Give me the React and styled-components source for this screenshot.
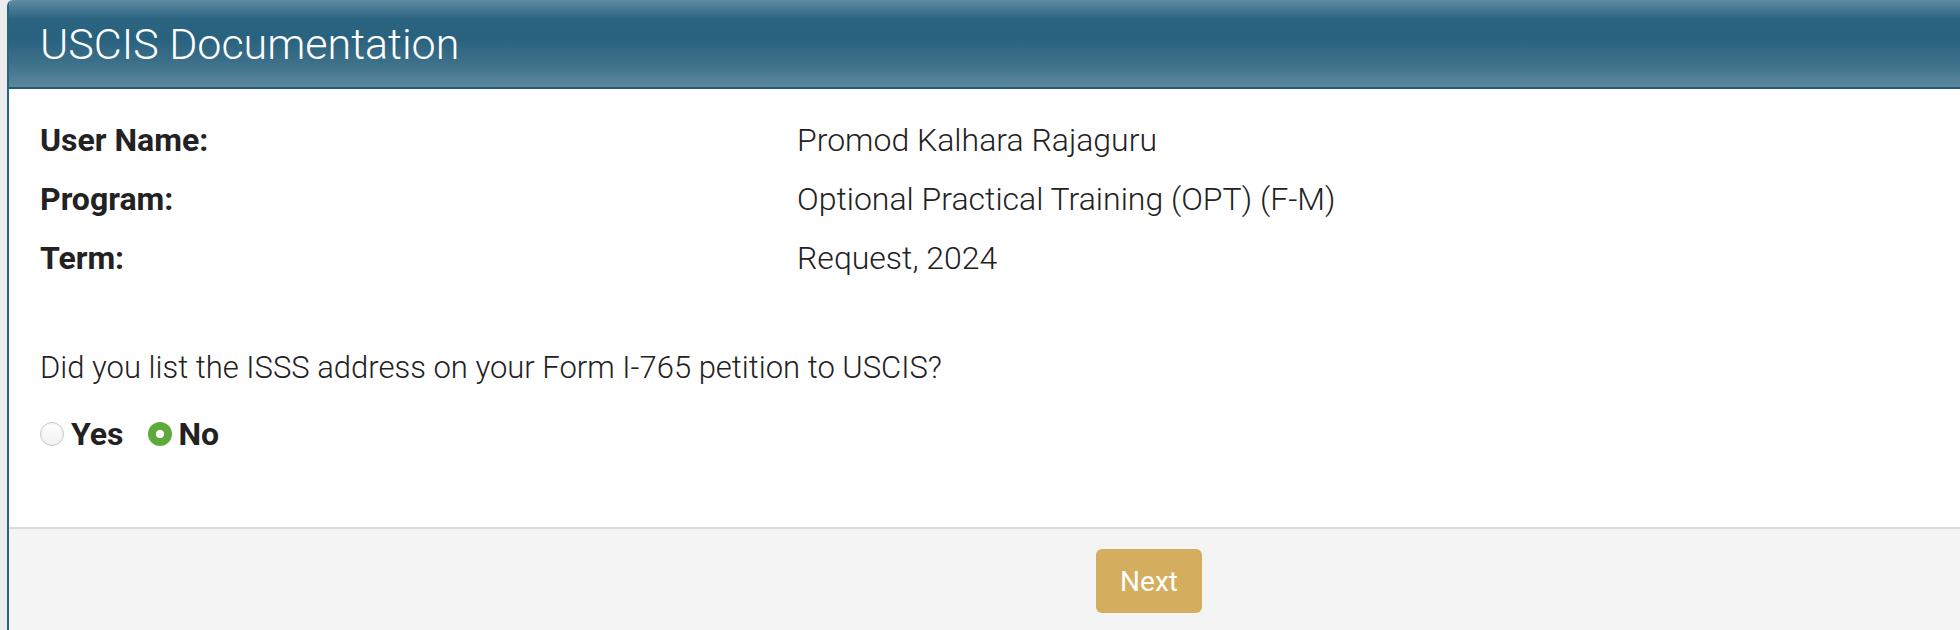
import React, { useState } from 'react';
import styled, { createGlobalStyle } from 'styled-components';

const GlobalStyle = createGlobalStyle`
  html, body {
    margin: 0;
    padding: 0;
    background: #ececec;
    overflow: hidden;
  }
  body {
    font-family: Roboto, 'Liberation Sans', sans-serif;
    color: #222;
  }
`;

const details = [
  { label: 'User Name:', value: 'Promod Kalhara Rajaguru' },
  { label: 'Program:', value: 'Optional Practical Training (OPT) (F-M)' },
  { label: 'Term:', value: 'Request, 2024' },
];

const App = () => {
  const [answer, setAnswer] = useState('no');

  return (
    <>
      <GlobalStyle />
      <Panel>
        <Header>
          <Title>USCIS Documentation</Title>
        </Header>

        <Body>
          <Details>
            {details.map((row) => (
              <React.Fragment key={row.label}>
                <Label>{row.label}</Label>
                <Value>{row.value}</Value>
              </React.Fragment>
            ))}
          </Details>

          <Question>Did you list the ISSS address on your Form I-765 petition to USCIS?</Question>

          <Choices>
            <Choice onClick={() => setAnswer('yes')}>
              <Radio checked={answer === 'yes'} />
              <span>Yes</span>
            </Choice>
            <Choice onClick={() => setAnswer('no')}>
              <Radio checked={answer === 'no'} />
              <span>No</span>
            </Choice>
          </Choices>
        </Body>

        <Footer>
          <NextButton>Next</NextButton>
        </Footer>
      </Panel>
    </>
  );
};

const Panel = styled.div`
  width: 2280px;
  height: 630px;
  margin-left: 7px;
  background: #fff;
  border-left: 2px solid #2a6380;
  border-top-left-radius: 6px;
  overflow: hidden;
  display: flex;
  flex-direction: column;
`;

const Header = styled.div`
  height: 87px;
  border-bottom: 2px solid #245a75;
  background: linear-gradient(
    to bottom,
    #5f8ca2 0%,
    #2b6481 22%,
    #29627f 45%,
    #3d7089 72%,
    #5b889e 100%
  );
  display: flex;
  align-items: center;
  padding-left: 31px;
`;

const Title = styled.h1`
  margin: 0;
  font-size: 43px;
  font-weight: 300;
  color: #fff;
`;

const Body = styled.div`
  padding: 22px 31px 0;
  flex: 0 0 438px;
  box-sizing: border-box;
`;

const Details = styled.div`
  display: grid;
  grid-template-columns: 757px 1fr;
  line-height: 59px;
`;

const Label = styled.div`
  font-size: 32px;
  font-weight: 700;
  color: #222;
`;

const Value = styled.div`
  font-size: 32px;
  font-weight: 300;
  color: #222;
`;

const Question = styled.p`
  margin: 59px 0 0;
  font-size: 31px;
  line-height: 42px;
  font-weight: 300;
  color: #222;
`;

const Choices = styled.div`
  display: flex;
  align-items: center;
  gap: 24px;
  margin-top: 26px;
`;

const Choice = styled.label`
  display: flex;
  align-items: center;
  gap: 7px;
  font-size: 32px;
  font-weight: 700;
  color: #222;
  cursor: pointer;
`;

const Radio = styled.span`
  width: 24px;
  height: 24px;
  border-radius: 50%;
  box-sizing: border-box;
  border: ${({ checked }) => (checked ? '8px solid #5eab3c' : '1px solid #c9c9c9')};
  background: ${({ checked }) => (checked ? '#fff' : 'linear-gradient(#fff, #f1f1f1)')};
  box-shadow: ${({ checked }) => (checked ? 'none' : 'inset 0 1px 2px rgba(0,0,0,0.06)')};
`;

const Footer = styled.div`
  flex: 1;
  background: #f4f4f4;
  border-top: 2px solid #dcdcdc;
  display: flex;
  justify-content: center;
  align-items: flex-start;
  padding-top: 20px;
`;

const NextButton = styled.button`
  height: 64px;
  padding: 0 24px;
  border: none;
  border-radius: 6px;
  background: #d4ae5e;
  color: #fff;
  font-family: Roboto, 'Liberation Sans', sans-serif;
  font-size: 28px;
  font-weight: 400;
  cursor: pointer;
`;

export default App;
